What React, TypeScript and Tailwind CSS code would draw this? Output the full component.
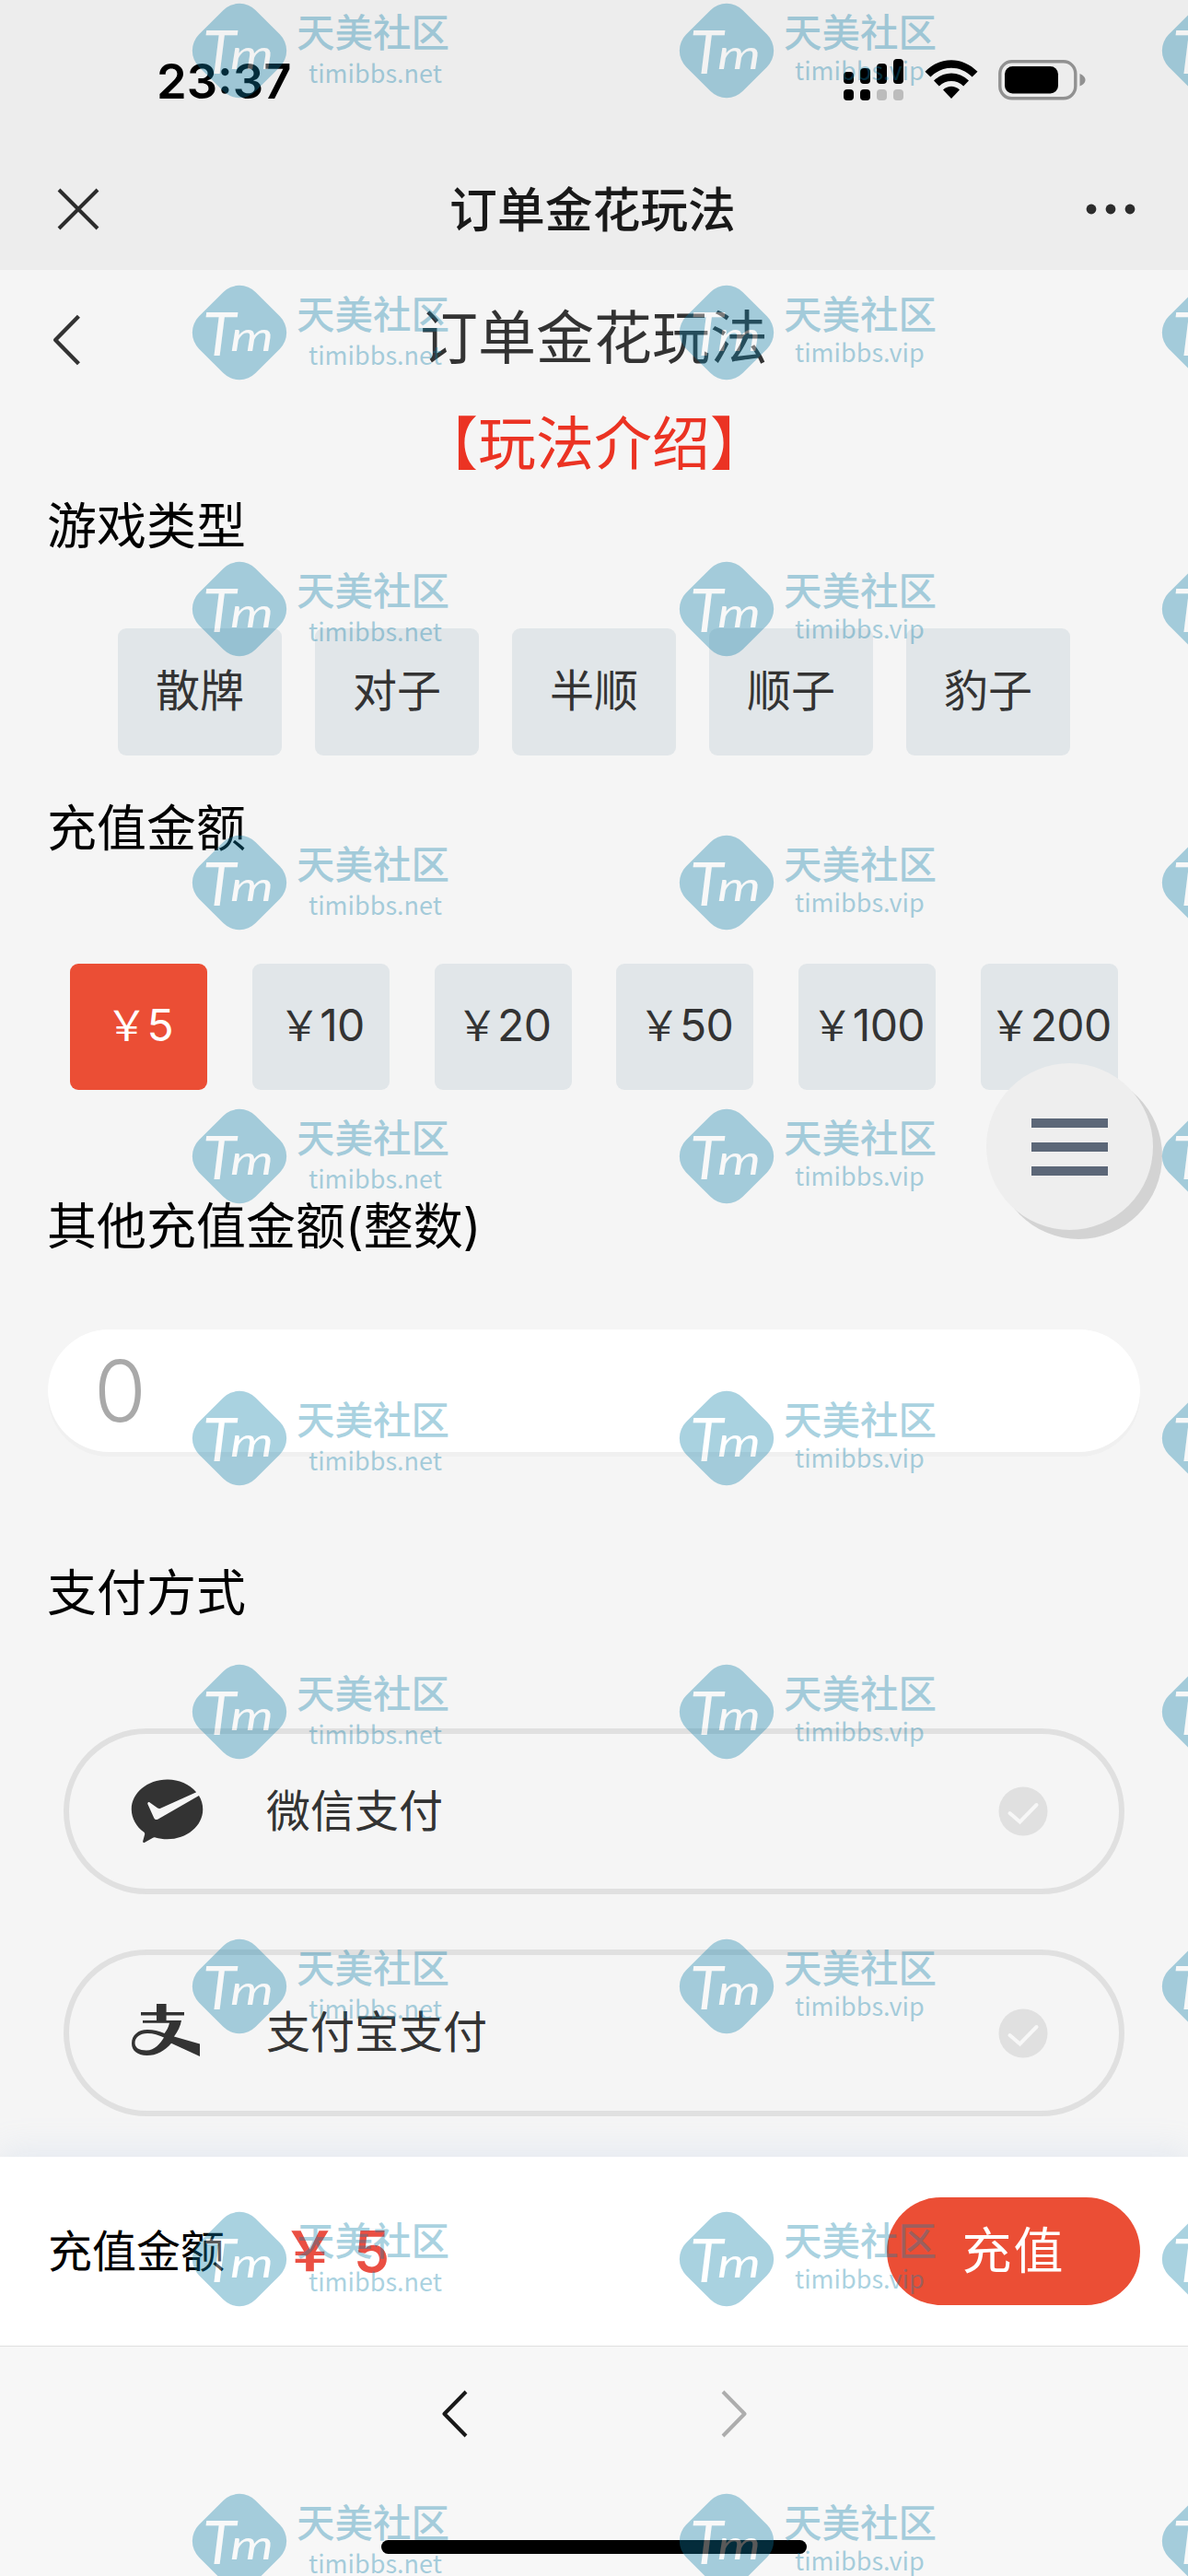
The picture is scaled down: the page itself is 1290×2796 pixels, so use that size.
import { useState } from "react";
import type { ReactNode } from "react";
import { RiWechatPayFill } from "react-icons/ri";

const GAME_TYPES = ["散牌", "对子", "半顺", "顺子", "豹子"];
const AMOUNTS = [5, 10, 20, 50, 100, 200];

const MARK_ROWS = [3, 309, 609, 906, 1203, 1509, 1806, 2104, 2400, 2706];
const MARK_COLS = [
  { left: 208, domain: "timibbs.net" },
  { left: 737, domain: "timibbs.vip" },
  { left: 1261, domain: "" },
];

function SignalIcon() {
  return (
    <svg width="66" height="46" viewBox="0 0 66 46">
      <rect x="0" y="14" width="11" height="13" rx="4" />
      <rect x="18" y="10" width="11" height="17" rx="4" />
      <rect x="36" y="5" width="11" height="22" rx="4" />
      <rect x="54" y="0" width="11" height="27" rx="4" />
      <rect x="0" y="33" width="11" height="12" rx="4" />
      <rect x="18" y="33" width="11" height="12" rx="4" />
      <rect x="36" y="33" width="11" height="12" rx="4" fill="#bcbcbc" />
      <rect x="54" y="33" width="11" height="12" rx="4" fill="#bcbcbc" />
    </svg>
  );
}

function WifiIcon() {
  return (
    <svg width="58" height="43" viewBox="0 0 58 43">
      <path d="M0.5 12.8C17-4 41-4 57.5 12.8L51.6 18.6C38.5 5.6 19.5 5.6 6.4 18.6Z" />
      <path d="M10 22.6C21 11.8 37 11.8 48 22.6L42.2 28.5C34.5 21.2 23.5 21.2 15.8 28.5Z" />
      <path d="M20 32.5C25.5 27.5 32.5 27.5 38 32.5L29 42Z" />
    </svg>
  );
}

function BatteryIcon() {
  return (
    <svg width="96" height="44" viewBox="0 0 96 44">
      <rect x="1.8" y="1.8" width="82" height="40" rx="13" fill="none" stroke="#919191" strokeWidth="3.4" />
      <rect x="7" y="7" width="58" height="29.5" rx="8.5" />
      <path d="M88.5 15C93 17 94.5 19.5 94.5 21.8S93 26.7 88.5 28.6Z" fill="#919191" />
    </svg>
  );
}

function AlipayIcon() {
  return (
    <svg width="74" height="57" viewBox="0 0 74 57" fill="#333" fillRule="evenodd" className="mb-[6px]">
      <path d="M27 0H37.6V9H57V12.5H37.6V18H54C53 24 50 30 46 35.5L74 43.4V57L43 42.7C36 51 27 56 16.5 56C6 56 0 50.5 0 43C0 34 7 28 17 28C24 28 29 29.5 35.6 32C38 29 40 25 41 20.7H12V18H27V12.5H10V9H27ZM35 36.5C29 34 24 32 17 32C9 32 3.5 36.5 3.5 42.5C3.5 47.5 8 50.5 16 50.5C25 50.5 31 43 35 36.5Z" />
    </svg>
  );
}

function Chevron({ flip, className }: { flip?: boolean; className: string }) {
  return (
    <svg viewBox="0 0 28 52" fill="none" strokeWidth="4" strokeLinejoin="round" className={className}>
      <path d={flip ? "M2 2L25.5 26L2 50" : "M26 2L2.5 26L26 50"} />
    </svg>
  );
}

function PhoneHeader() {
  return (
    <header className="h-[293px] bg-[#ededed]">
      <div className="flex h-40 items-start justify-between pl-[170px] pr-[110px]">
        <div className="mt-[58px] text-[52.5px] font-semibold leading-[60px] text-black">23:37</div>
        <div className="mt-[64px] flex">
          <SignalIcon />
          <div className="ml-[22px] mt-px">
            <WifiIcon />
          </div>
          <div className="ml-[22px] mt-px">
            <BatteryIcon />
          </div>
        </div>
      </div>
      <div className="flex h-[133px] items-center justify-between pl-[62px] pr-[57px]">
        <svg width="46" height="46" viewBox="0 0 46 46" stroke="#2c2c2c" strokeWidth="4">
          <path d="M2 2L44 44M44 2L2 44" />
        </svg>
        <h1 className="pt-[2px] text-[51.8px] font-medium leading-[60px] text-[#191919]">订单金花玩法</h1>
        <svg width="54" height="12" viewBox="0 0 54 12" fill="#2c2c2c">
          <circle cx="6" cy="6" r="5.4" />
          <circle cx="27" cy="6" r="5.4" />
          <circle cx="48" cy="6" r="5.4" />
        </svg>
      </div>
    </header>
  );
}

function SectionTitle({ children, className }: { children: string; className?: string }) {
  return (
    <h3 className={`flex h-[98px] items-center pl-[51px] pt-1 text-[54px] leading-[60px] text-black ${className ?? ""}`}>
      {children}
    </h3>
  );
}

function PayOption({ icon, label, className }: { icon: ReactNode; label: string; className: string }) {
  return (
    <div
      className={`mx-[69px] flex items-center rounded-full border-[6px] border-[#e0e0e0] pl-[68px] pr-[77px] ${className}`}
    >
      <div className="flex w-[146px] items-center">{icon}</div>
      <span className="mt-[-1px] flex-1 text-[48px] leading-[60px] text-[#333]">{label}</span>
      <svg width="54" height="54" viewBox="0 0 54 54" fill="none">
        <circle cx="27" cy="27" r="26.5" fill="#e0e0e0" />
        <path d="M12.5 29L23.5 38.5L41.5 20" stroke="#f7f7f7" strokeWidth="4" strokeLinecap="round" />
      </svg>
    </div>
  );
}

function Watermark({ left, top, domain }: { left: number; top: number; domain: string }) {
  const vip = domain === "timibbs.vip";
  return (
    <div className="absolute flex opacity-35" style={{ left, top }}>
      <svg width="104" height="104" viewBox="0 0 104 104" className="shrink-0">
        <rect x="8.5" y="8.5" width="87" height="87" rx="25" transform="rotate(45 52 52)" fill="#0d7fa9" />
        <g fill="#fff" fontFamily="Lato" fontStyle="italic">
          <text x="12" y="77" fontSize="66">
            T
          </text>
          <text x="42" y="72" fontSize="45" textLength="47" lengthAdjust="spacingAndGlyphs">
            m
          </text>
        </g>
      </svg>
      {/* the last column runs off the screen, only its badge is visible */}
      {domain && (
        <div className="ml-[10px] whitespace-nowrap text-[#0d7fa9]">
          <div className="mt-[3px] text-[41.5px] font-medium leading-[60px]">天美社区</div>
          <div
            className={`font-['Noto_Sans_CJK_SC'] text-[27px] leading-[30px] ${vip ? "ml-[12px] mt-[-5px]" : "ml-[13px] mt-[-2px]"}`}
          >
            {domain}
          </div>
        </div>
      )}
    </div>
  );
}

export default function App() {
  const [amount, setAmount] = useState(5);

  return (
    <div className="relative flex h-[2796px] w-[1290px] flex-col overflow-hidden bg-[#f5f5f5] font-['Inter','Noto_Sans_CJK_SC',sans-serif]">
      <PhoneHeader />

      <main className="h-[2048px]">
        <div className="grid h-[146px] grid-cols-[1fr_auto_1fr] items-center">
          <Chevron className="ml-[57px] mt-[5px] h-[56px] w-[31px] stroke-[#333]" />
          <h2 className="text-[63px] leading-[80px] text-[#333]">订单金花玩法</h2>
        </div>
        <div className="flex h-[82px] items-center justify-center pt-[2px] text-[63px] leading-[80px] text-[#eb3323]">
          【玩法介绍】
        </div>

        <SectionTitle>游戏类型</SectionTitle>
        <div className="mt-[63px] flex justify-center gap-9">
          {GAME_TYPES.map((type) => (
            <button key={type} className="h-[138px] w-[178px] rounded-[9px] bg-[#e1e6e9] pb-0.5 text-[48px] text-[#333]">
              {type}
            </button>
          ))}
        </div>

        <SectionTitle className="mt-[29px]">充值金额</SectionTitle>
        <div className="mx-[76px] mt-[99px] flex justify-between">
          {AMOUNTS.map((value) => (
            <button
              key={value}
              onClick={() => setAmount(value)}
              className={`flex h-[137px] w-[149px] items-center justify-center whitespace-nowrap rounded-[9px] pb-[3px] pl-[2px] text-[48px] tracking-[-0.6px] ${
                value === amount ? "bg-[#eb4e35] text-white" : "bg-[#e1e6e9] text-[#333]"
              }`}
            >
              <span className="mt-px text-[45px]">￥</span>
              {value}
            </button>
          ))}
        </div>

        <SectionTitle className="mt-[98px]">其他充值金额(整数)</SectionTitle>
        <div className="mx-[52px] mt-[64px] flex h-[133px] items-center rounded-full bg-white pl-[50px] text-[92px] font-light leading-none text-[#a9a9a9] shadow-[0_5px_0_#f0f0f0]">
          0
        </div>

        <SectionTitle className="mt-[103px]">支付方式</SectionTitle>
        <PayOption
          className="mt-[99px] h-[180px]"
          label="微信支付"
          icon={<RiWechatPayFill className="-ml-2 mb-[4px] size-[93px] text-[#333]" />}
        />
        <PayOption className="mt-[60px] h-[181px]" label="支付宝支付" icon={<AlipayIcon />} />
      </main>

      <div className="flex h-[205px] items-center bg-white pl-[52px] pr-[52px] shadow-[0_-4px_36px_rgba(150,180,225,0.2)]">
        <span className="text-[48px] leading-[60px] text-black">充值金额</span>
        <div className="ml-[63px] flex flex-1 gap-[27px] text-[62px] font-semibold leading-[60px] text-[#ea4f43]">
          <span className="w-[50px] text-[59px]">￥</span>
          <span>{amount}</span>
        </div>
        <button className="h-[117px] w-[275px] rounded-full bg-[#eb4e35] text-[54px] tracking-[2px] text-white">
          充值
        </button>
      </div>

      <footer className="flex h-[250px] flex-col items-center border-t border-[#e0e0e0] bg-[#f7f7f7]">
        <div className="mt-[47px] flex gap-[275px]">
          <Chevron className="h-[52px] w-[28px] stroke-[#191919]" />
          <Chevron flip className="h-[52px] w-[28px] stroke-[#adadad]" />
        </div>
        <div className="mt-[111px] h-[15px] w-[462px] rounded-full bg-black" />
      </footer>

      <button className="absolute left-[1071px] top-[1154px] flex size-[181px] flex-col items-center justify-center gap-4 rounded-full bg-[#eee] shadow-[10px_10px_0_#d3d3d3]">
        <span className="h-[10px] w-[83px] bg-[#5c6778]" />
        <span className="h-[10px] w-[83px] bg-[#5c6778]" />
        <span className="h-[10px] w-[83px] bg-[#5c6778]" />
      </button>

      <div className="pointer-events-none absolute inset-0 overflow-hidden">
        {MARK_ROWS.map((top) =>
          MARK_COLS.map((col) => <Watermark key={`${top}-${col.left}`} left={col.left} top={top} domain={col.domain} />)
        )}
      </div>
    </div>
  );
}
